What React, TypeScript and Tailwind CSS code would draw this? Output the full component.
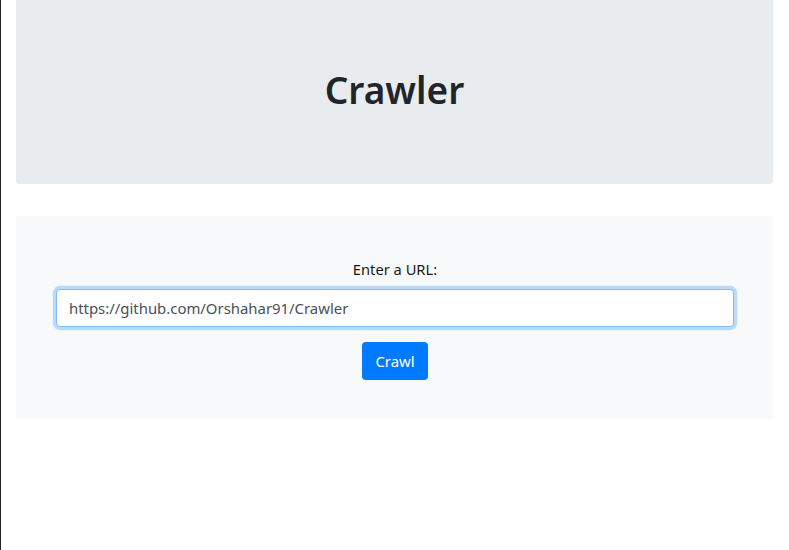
export default function App() {
  return (
    <div
      className="min-h-[550px] border-l border-[#222] pl-[15px] pr-[16px] bg-white text-[#212529]"
      style={{ fontFamily: '"Noto Sans", "Open Sans", sans-serif' }}
    >
      {/* Header */}
      <div className="bg-[#e9ecef] rounded-b-[4px] pt-[64px] pb-[64px] mb-[32px] text-center">
        <h1 className="text-[37px] leading-[52px] font-semibold mb-[4px]">Crawler</h1>
      </div>

      {/* Form */}
      <div className="bg-[#f8f9fa] pt-[41px] pb-[39px] pl-[40px] pr-[39px] flex flex-col items-center">
        <label className="text-[14.7px] leading-[24px] mb-[8px] text-[#1a1a1a]">Enter a URL:</label>
        <input
          className="w-full h-[38px] px-[12px] text-[14.9px] text-[#495057] bg-white border border-[#80bdff] rounded-[4px] shadow-[0_0_0_3.2px_rgba(0,123,255,0.25)] outline-none"
          defaultValue="https://github.com/Orshahar91/Crawler"
        />
        <button className="mt-[15px] h-[38px] w-[66px] text-[14.9px] text-white bg-[#007bff] rounded-[4px]">
          Crawl
        </button>
      </div>
    </div>
  );
}
